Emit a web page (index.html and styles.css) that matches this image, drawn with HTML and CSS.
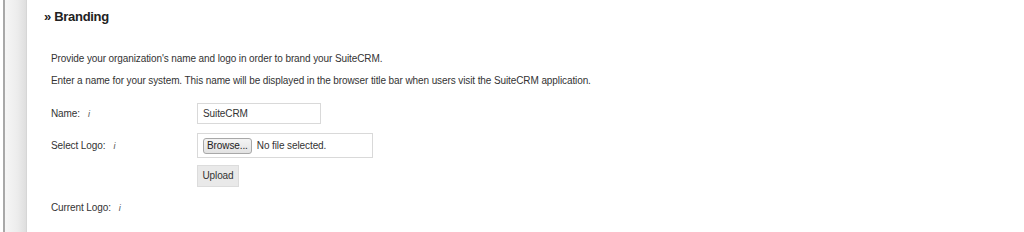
FILE: index.html
```html
<!DOCTYPE html>
<html>
<head>
<meta charset="utf-8">
<link rel="stylesheet" href="styles.css">
</head>
<body>
<div class="page">
  <div class="edge"><div class="edge-line"></div><div class="edge-fill"></div></div>
  <div class="content">
    <h2 class="title">» Branding</h2>
    <div class="intro">
      <p class="para">Provide your organization's name and logo in order to brand your SuiteCRM.</p>
      <p class="para para2">Enter a name for your system. This name will be displayed in the browser title bar when users visit the SuiteCRM application.</p>
    </div>
    <div class="form">
      <div class="row row-name">
        <div class="label">Name:<span class="info">i</span></div>
        <div class="field"><div class="text-input">SuiteCRM</div></div>
      </div>
      <div class="row row-logo">
        <div class="label">Select Logo:<span class="info">i</span></div>
        <div class="field"><div class="file-input"><span class="browse">Browse...</span><span class="nofile">No file selected.</span></div></div>
      </div>
      <div class="row row-upload">
        <div class="label"></div>
        <div class="field"><span class="upload">Upload</span></div>
      </div>
      <div class="row row-current">
        <div class="label">Current Logo:<span class="info">i</span></div>
      </div>
    </div>
  </div>
</div>
</body>
</html>
```

FILE: styles.css
```css
html, body {
  margin: 0;
  padding: 0;
  background: #ffffff;
}
body {
  font-family: "Liberation Sans", Arial, sans-serif;
  color: #333333;
  font-size: 10px;
  letter-spacing: -0.1px;
}
.page {
  display: flex;
  height: 232px;
  overflow: hidden;
}
.edge {
  display: flex;
  width: 27px;
  flex: 0 0 27px;
  padding-left: 3px;
  box-sizing: border-box;
}
.edge-line {
  width: 2px;
  background: #a8a8a8;
}
.edge-fill {
  flex: 1;
  background: linear-gradient(to right, #f6f6f6, #ececec 60%, #dedede);
  border-right: 1px solid #d6d6d6;
}
.content {
  flex: 1;
  padding-left: 17px;
}
.title {
  margin: 8px 0 0 0;
  font-size: 13px;
  line-height: 17px;
  font-weight: bold;
  letter-spacing: -0.3px;
  color: #222222;
}
.intro {
  margin-top: 27px;
  padding-left: 7px;
}
.para {
  margin: 0;
  line-height: 14px;
}
.para2 {
  margin-top: 8px;
}
.form {
  padding-left: 7px;
  margin-top: 15px;
}
.row {
  display: flex;
  align-items: center;
}
.label {
  width: 146px;
  flex: 0 0 146px;
}
.info {
  font-style: italic;
  margin-left: 8px;
  color: #555555;
  font-size: 9px;
}
.text-input {
  width: 124px;
  height: 21px;
  box-sizing: border-box;
  border: 1px solid #d9d9d9;
  padding-left: 5px;
  line-height: 19px;
  color: #333;
}
.row-logo {
  margin-top: 9px;
}
.file-input {
  width: 176px;
  height: 25px;
  box-sizing: border-box;
  border: 1px solid #d9d9d9;
  display: flex;
  align-items: center;
  padding-left: 5px;
}
.browse {
  display: inline-block;
  height: 16px;
  line-height: 14px;
  box-sizing: border-box;
  padding: 0 3px;
  border: 1px solid #a8a8a8;
  border-radius: 3px;
  background: linear-gradient(#f4f4f4, #e2e2e2);
  color: #222;
}
.nofile {
  margin-left: 5px;
  color: #333;
}
.row-upload {
  margin-top: 7px;
}
.upload {
  display: inline-block;
  width: 42px;
  height: 22px;
  box-sizing: border-box;
  line-height: 20px;
  text-align: center;
  background: #e9e9e9;
  border: 1px solid #dcdcdc;
  color: #333;
}
.row-current {
  margin-top: 14px;
  line-height: 14px;
}
```
